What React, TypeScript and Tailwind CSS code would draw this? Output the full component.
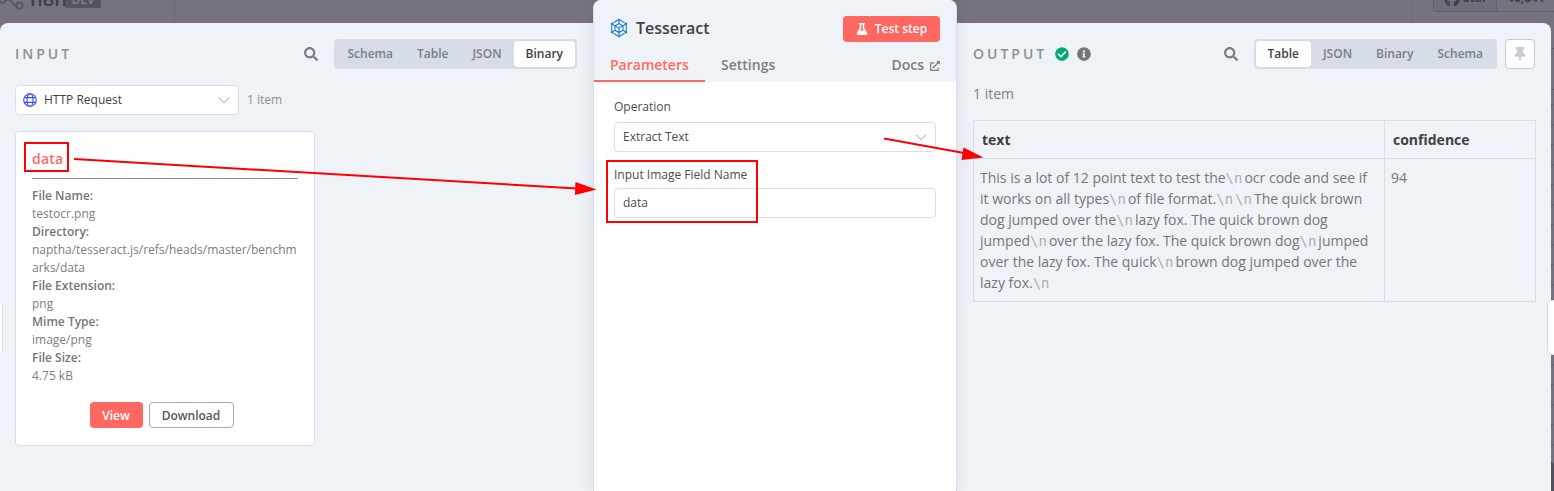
import { FaSearch, FaFlask, FaCheckCircle, FaInfoCircle, FaThumbtack, FaExternalLinkAlt, FaGithub } from "react-icons/fa";

function Tabs({ items, active }: { items: string[]; active: string }) {
  return (
    <div className="flex h-[30px] items-center rounded bg-[#d7dde7] px-[2px] text-[12px] font-semibold">
      {items.map((t) => (
        <div
          key={t}
          className={
            t === active
              ? "flex h-[26px] items-center rounded bg-white px-[12px] text-[#404145]"
              : "flex h-[26px] items-center rounded px-[12px] text-[#7b7e84]"
          }
        >
          {t}
        </div>
      ))}
    </div>
  );
}

function Chevron() {
  return (
    <svg width="12" height="7" viewBox="0 0 12 7" fill="none" stroke="#b4b8c0" strokeWidth="1.1">
      <path d="M1 .8 6 5.8 11 .8" />
    </svg>
  );
}

function GlobeIcon() {
  return (
    <svg width="14" height="14" viewBox="0 0 14 14" fill="none" stroke="#3a4ce0" strokeWidth="1.1">
      <circle cx="7" cy="7" r="6.3" />
      <ellipse cx="7" cy="7" rx="3" ry="6.3" />
      <path d="M1.2 4.6h11.6M1.2 9.4h11.6" />
    </svg>
  );
}

function TesseractIcon() {
  return (
    <svg width="18" height="20" viewBox="0 0 18 20" fill="none" stroke="#2480cc" strokeWidth="1.1" className="-mt-[3px]">
      <path d="M9 1.5 16.3 5.7v8.6L9 18.5 1.7 14.3V5.7z" />
      <path d="M9 5.6 13 7.900v4.400L9 14.500 5 12.300V7.900zM5 7.900 9 10l4-2.100M9 10v4.500" />
      <path d="M9 1.500v4.100M1.700 5.700 5 7.900M16.300 5.700 13 7.900M1.700 14.300l3.300-2M16.300 14.300l-3.300-2M9 18.500v-4" />
      <g fill="#2480cc" stroke="none">
        <circle cx="9" cy="1.500" r="1" /><circle cx="16.300" cy="5.700" r="1" /><circle cx="16.300" cy="14.300" r="1" />
        <circle cx="9" cy="18.500" r="1" /><circle cx="1.700" cy="14.300" r="1" /><circle cx="1.700" cy="5.700" r="1" />
      </g>
    </svg>
  );
}

function Backdrop() {
  return (
    <div className="absolute inset-0 overflow-hidden bg-[#76737e]">
      <div className="flex h-[32px] text-[#3f3d49]">
        <div className="flex w-[175px] shrink-0 border-r border-[#6b6977]">
          <svg width="26" height="12" viewBox="0 0 26 12" fill="none" stroke="#57555f" strokeWidth="1.700">
            <circle cx="2.500" cy="0" r="3" />
            <circle cx="19.500" cy="5.500" r="3.200" />
            <path d="M5.500 0h4c3 0 2 5.500 6.500 5.500" />
          </svg>
          <span className="-mt-[15px] ml-[4px] w-[31px] text-[20px] font-semibold leading-[27px]">n8n</span>
          <span className="-mt-[8px] ml-[4px] flex h-[16px] w-[36px] items-center justify-center rounded-[2px] bg-[#55545c] text-[12px] font-semibold text-[#85828c]">
            DEV
          </span>
        </div>
        <div className="w-[1238px] shrink-0 border-r border-[#6b6977]" />
        <div className="ml-[20px] -mt-[10px] flex h-[22px] shrink-0 rounded-[3px] border border-[#626070] text-[12px] font-bold leading-[16px]">
          <div className="flex w-[63px] gap-[3px] border-r border-[#626070] bg-[#706e79] pl-[10px]">
            <FaGithub size={16} className="shrink-0" />
            <span className="-mt-[1px]">Star</span>
          </div>
          <div className="-mt-[1px] w-[58px] pl-[10px]">46,841</div>
        </div>
      </div>
      <div className="ml-auto h-[58px] w-[4px] border-b border-[#5b5965]">
        <div className="h-[17px] border-b border-[#5b5965]" />
      </div>
      <div className="ml-auto mt-[5px] h-[368px] w-[4px] bg-[radial-gradient(circle,#55535d_0.600px,transparent_0.900px)] bg-size-[4px_20px]" />
      <div className="absolute right-0 bottom-0 h-[29px] w-[3px] rounded-tr bg-[#52515a]" />
    </div>
  );
}

const fileInfo: [string, string[]][] = [
  ["File Name:", ["testocr.png"]],
  ["Directory:", ["naptha/tesseract.js/refs/heads/master/benchm", "arks/data"]],
  ["File Extension:", ["png"]],
  ["Mime Type:", ["image/png"]],
  ["File Size:", ["4.75 kB"]],
];

function InputPanel() {
  return (
    <section className="mt-[23px] flex w-[593px] shrink-0 flex-col rounded-tl-lg bg-[#eff3f8] px-[15px] pt-[16px]">
      <div className="flex h-[30px] items-center">
        <h2 className="-mt-[1px] text-[14px] font-semibold tracking-[3px] text-[#8d9096]">INPUT</h2>
        <FaSearch size={14} className="mr-[16px] ml-auto text-[#7b7e84]" />
        <div className="mr-[1px]">
          <Tabs items={["Schema", "Table", "JSON", "Binary"]} active="Binary" />
        </div>
      </div>
      <div className="mt-[16px] flex h-[30px] items-center text-[12px]">
        <div className="flex h-[30px] w-[224px] items-center rounded border border-[#d7dde9] bg-white pr-[8px] pl-[7px] text-[#404145]">
          <GlobeIcon />
          <span className="mr-auto ml-[7px]">HTTP Request</span>
          <Chevron />
        </div>
        <span className="ml-[8px] text-[#8d9096]">1 item</span>
      </div>
      <div className="mt-[16px] flex h-[315px] w-[300px] flex-col rounded border border-[#d7dde9] bg-white px-[16px] text-[12px] leading-[18px] text-[#7b7e84]">
        <div className="mt-[16px] h-[31px] border-b border-[#8f9197] text-[14px] font-semibold leading-[22px] tracking-[0.2px] text-[#ff6a64]">data</div>
        <div className="mt-[8px]">
          {fileInfo.map(([k, lines]) => (
            <div key={k}>
              <div className="font-semibold text-[#73767c]">{k}</div>
              {lines.map((l) => (
                <div key={l} className="whitespace-nowrap">{l}</div>
              ))}
            </div>
          ))}
        </div>
        <div className="mt-[17px] flex justify-center gap-[6px] pr-[7px] font-semibold">
          <button className="h-[26px] w-[53px] rounded bg-[#ff6761] pt-[2px] text-white">View</button>
          <button className="h-[26px] w-[85px] rounded border border-[#a5a9b6] pt-[2px] text-[#555860]">Download</button>
        </div>
      </div>
    </section>
  );
}

function NodePanel() {
  return (
    <main className="relative z-10 w-[364px] shrink-0 rounded-t-lg border-x border-[#d7dde9] bg-white shadow-[0_0_16px_rgba(60,60,90,0.130)]">
      <header className="h-[82px] rounded-t-lg bg-[#eff3f8]">
        <div className="flex items-center pt-[16px] pr-[16px] pl-[16px]">
          <TesseractIcon />
          <h1 className="-mt-[2px] mr-auto ml-[8px] text-[16px] font-semibold leading-[24px] text-[#404145]">Tesseract</h1>
          <button className="flex h-[26px] w-[97px] items-center justify-center gap-[7px] rounded bg-[#ff6761] text-[12px] font-semibold text-white">
            <FaFlask size={12} />
            Test step
          </button>
        </div>
        <nav className="flex h-[40px] text-[14px] font-semibold leading-[20px] text-[#7b7e84]">
          <div className="w-[111px] border-b-2 border-[#ff6761] pt-[13px] pl-[16px] text-[#ff6a64]">Parameters</div>
          <div className="pt-[13px] pl-[16px]">Settings</div>
          <div className="mt-[13px] mr-[16px] ml-auto flex h-[20px] items-center gap-[6px]">
            Docs
            <FaExternalLinkAlt size={10} className="mt-[2px]" />
          </div>
        </nav>
      </header>
      <div className="px-[20px] text-[12px] leading-[18px] text-[#4b4c51]">
        <div className="pt-[16px]">Operation</div>
        <div className="mt-[6px] flex h-[30px] items-center justify-between rounded border border-[#d7dde9] pr-[8px] pl-[8px]">
          Extract Text
          <Chevron />
        </div>
        <div className="mt-[14px]">Input Image Field Name</div>
        <div className="mt-[4px] flex h-[30px] items-center rounded border border-[#d7dde9] pl-[8px]">data</div>
      </div>
    </main>
  );
}

const ocrLines = [
  "This is a lot of 12 point text to test the\\nocr code and see if",
  "it works on all types\\nof file format.\\n\\nThe quick brown",
  "dog jumped over the\\nlazy fox. The quick brown dog",
  "jumped\\nover the lazy fox. The quick brown dog\\njumped",
  "over the lazy fox. The quick\\nbrown dog jumped over the",
  "lazy fox.\\n",
];

function OcrLine({ text }: { text: string }) {
  return (
    <div className="h-[21px] whitespace-nowrap">
      {text.split("\\n").map((part, i) => (
        <span key={i}>
          {i > 0 && <span className="mr-[2px] font-['DejaVu_Sans_Mono',monospace] text-[#aaaeb9]">{"\\n"}</span>}
          {part}
        </span>
      ))}
    </div>
  );
}

function OutputPanel() {
  return (
    <section className="mt-[23px] flex w-[594px] shrink-0 flex-col rounded-tr-lg bg-[#eff3f8] pt-[16px] pr-[16px] pl-[16px]">
      <div className="flex h-[30px] items-center">
        <h2 className="-mt-[1px] text-[14px] font-semibold tracking-[3px] text-[#8d9096]">OUTPUT</h2>
        <FaCheckCircle size={14} className="ml-[8px] text-[#08a970]" />
        <FaInfoCircle size={14} className="ml-[8px] text-[#73767c]" />
        <FaSearch size={14} className="mr-[16px] ml-auto text-[#7b7e84]" />
        <Tabs items={["Table", "JSON", "Binary", "Schema"]} active="Table" />
        <div className="ml-[8px] flex h-[30px] w-[30px] items-center justify-center rounded border border-[#c4cad7] bg-white text-[#c4cad7]">
          <FaThumbtack size={14} />
        </div>
      </div>
      <div className="mt-[14px] text-[14px] leading-[21px] text-[#7b7e84]">1 item</div>
      <table className="mt-[16px] w-[563px] table-fixed border-collapse text-left text-[14px] leading-[21px] text-[#73767c]">
        <colgroup>
          <col className="w-[411px]" />
          <col />
        </colgroup>
        <thead>
          <tr className="h-[38px] text-[#404145]">
            <th className="border border-[#d7dde9] px-[8px] font-bold">text</th>
            <th className="border border-[#d7dde9] px-[8px] font-bold">confidence</th>
          </tr>
        </thead>
        <tbody>
          <tr className="h-[143px] align-top">
            <td className="border border-[#d7dde9] px-[6px] pt-[8px]">
              {ocrLines.map((l) => (
                <OcrLine key={l} text={l} />
              ))}
            </td>
            <td className="border border-[#d7dde9] px-[6px] pt-[8px]">94</td>
          </tr>
        </tbody>
      </table>
    </section>
  );
}

function Annotations() {
  return (
    <svg className="absolute inset-0 z-20" width="1554" height="491" viewBox="0 0 1554 491" fill="none" stroke="#f00" strokeWidth="2">
      <rect x="25" y="143" width="43" height="28" />
      <rect x="607" y="161" width="150" height="61" />
      <path d="M74 159 577 188.500M884 138.500 964 153" />
      <path d="M596.500 189.500 575.500 182 575 195zM983.500 157.500 963.500 147.500 961.500 160z" fill="#f00" stroke="none" />
    </svg>
  );
}

export default function App() {
  return (
    <div className="relative h-[491px] w-[1554px] overflow-hidden font-['Open_Sans','Noto_Sans',sans-serif]">
      <Backdrop />
      <div className="relative flex h-[491px]">
        <InputPanel />
        <NodePanel />
        <OutputPanel />
      </div>
      <div className="absolute top-[301px] -left-[18px] h-[54px] w-[21px] rounded-md border border-[#d7dde9] bg-white" />
      <div className="absolute top-[300px] left-[1547px] h-[55px] w-[21px] rounded-md border border-[#d7dde9] bg-white" />
      <Annotations />
    </div>
  );
}
